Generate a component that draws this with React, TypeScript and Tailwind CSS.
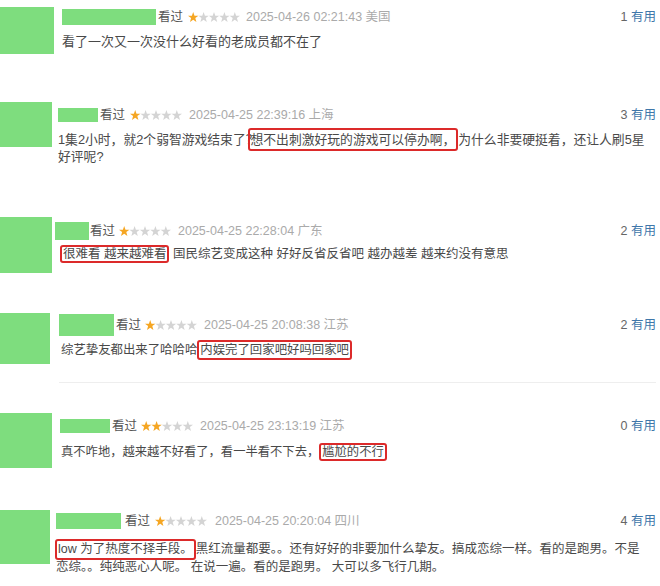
import React from "react";

// 一颗星一格 10.4px，五颗排成一行
const STAR = "5.2,0 6.5,3.7 10.4,3.8 7.3,6.1 8.4,9.9 5.2,7.7 2,9.9 3.1,6.1 0,3.8 3.9,3.7";

function Stars({ rating, className }: { rating: number; className: string }) {
  return (
    <svg width="52" height="10" viewBox="0 0 52 10" className={className}>
      {[0, 1, 2, 3, 4].map((i) => (
        <polygon
          key={i}
          points={STAR}
          transform={`translate(${i * 10.4} 0)`}
          fill={i < rating ? "#f5a623" : "#d4d4d4"}
        />
      ))}
    </svg>
  );
}

// 红框标注
function Mark({ className, children }: { className: string; children: React.ReactNode }) {
  return (
    <span
      className={`inline-block -my-[4px] rounded-[3px] border-2 border-[#dc2a2a] px-[1px] ${className}`}
    >
      {children}
    </span>
  );
}

interface Review {
  box: string;
  avatar: string;
  col: string;
  row: string;
  name: string;
  seen: string;
  stars: string;
  date: string;
  rating: number;
  time: string;
  place: string;
  useful: number;
  body: string;
  content: React.ReactNode;
  after?: React.ReactNode;
}

const reviews: Review[] = [
  {
    box: "h-[95px]",
    avatar: "mt-[7px] h-[47px] w-[54px]",
    col: "ml-[8px]",
    row: "mt-[9px] h-[16px]",
    name: "w-[94px] h-[16px]",
    seen: "ml-[2px]",
    stars: "ml-[5px]",
    date: "ml-[6px]",
    rating: 1,
    time: "2025-04-26 02:21:43",
    place: "美国",
    useful: 1,
    body: "mt-[8px] text-[13px] leading-[18px]",
    content: <>看了一次又一次没什么好看的老成员都不在了</>,
  },
  {
    box: "h-[110px]",
    avatar: "mt-[7px] h-[45px] w-[52px]",
    col: "ml-[6px]",
    row: "mt-[13px] h-[14px]",
    name: "w-[40px] h-[14px]",
    seen: "ml-[2px]",
    stars: "ml-[5px]",
    date: "ml-[7px]",
    rating: 1,
    time: "2025-04-25 22:39:16",
    place: "上海",
    useful: 3,
    body: "mt-[9px] text-[12.8px] leading-[17px]",
    content: (
      <>
        1集2小时，就2个弱智游戏结束了？
        <Mark className="-ml-[11px] leading-[19px]">想不出刺激好玩的游戏可以停办啊，</Mark>
        为什么非要硬挺着，还让人刷5星
        <br />
        好评呢?
      </>
    ),
  },
  {
    box: "h-[95px]",
    avatar: "mt-[12px] h-[56px] w-[52px]",
    col: "ml-[3px]",
    row: "mt-[17px] h-[18px]",
    name: "w-[34px] h-[18px]",
    seen: "ml-[1px]",
    stars: "ml-[4px]",
    date: "ml-[7px]",
    rating: 1,
    time: "2025-04-25 22:28:04",
    place: "广东",
    useful: 2,
    body: "mt-[6px] ml-[5px] text-[12.5px] leading-[17px]",
    content: (
      <>
        <Mark className="leading-[14px]">很难看 越来越难看</Mark> 国民综艺变成这种 好好反省反省吧 越办越差
        越来约没有意思
      </>
    ),
  },
  {
    box: "h-[95px]",
    avatar: "mt-[13px] h-[51px] w-[50px]",
    col: "ml-[9px]",
    row: "mt-[14px] h-[22px]",
    name: "w-[55px] h-[22px]",
    seen: "ml-[2px]",
    stars: "ml-[4px]",
    date: "ml-[7px]",
    rating: 1,
    time: "2025-04-25 20:08:38",
    place: "江苏",
    useful: 2,
    body: "mt-[6px] ml-[2px] text-[12.4px] leading-[17px]",
    content: (
      <>
        综艺挚友都出来了哈哈哈
        <Mark className="leading-[16px]">内娱完了回家吧好吗回家吧</Mark>
      </>
    ),
    after: <div className="mt-[23px] h-px bg-[#eeeeee]" />,
  },
  {
    box: "h-[100px]",
    avatar: "mt-[18px] h-[55px] w-[52px]",
    col: "ml-[8px]",
    row: "mt-[24px] h-[14px]",
    name: "w-[50px] h-[14px]",
    seen: "ml-[2px]",
    stars: "ml-[4px]",
    date: "ml-[7px]",
    rating: 2,
    time: "2025-04-25 23:13:19",
    place: "江苏",
    useful: 0,
    body: "mt-[11px] ml-[1px] text-[12.3px] leading-[17px]",
    content: (
      <>
        真不咋地，越来越不好看了，看一半看不下去，
        <Mark className="leading-[14px]">尴尬的不行</Mark>
      </>
    ),
  },
  {
    box: "h-[91px]",
    avatar: "mt-[15px] h-[54px] w-[50px]",
    col: "ml-[6px]",
    row: "mt-[18px] h-[16px]",
    name: "w-[65px] h-[16px]",
    seen: "ml-[4px]",
    stars: "ml-[5px]",
    date: "ml-[8px]",
    rating: 1,
    time: "2025-04-25 20:20:04",
    place: "四川",
    useful: 4,
    body: "mt-[11px] text-[12.5px] leading-[18px]",
    content: (
      <>
        <Mark className="-ml-[1px] leading-[17px]">low 为了热度不择手段。</Mark>
        黑红流量都要。。还有好好的非要加什么挚友。搞成恋综一样。看的是跑男。不是
        <br />
        恋综。。纯纯恶心人呢。 在说一遍。看的是跑男。 大可以多飞行几期。
      </>
    ),
  },
];

function ReviewItem({ r }: { r: Review }) {
  return (
    <div className={`flex overflow-hidden ${r.box}`}>
      <div className={`shrink-0 bg-[#7edd7e] ${r.avatar}`} />
      <div className={`flex-1 pr-[4px] ${r.col}`}>
        <div className={`flex items-center text-[12.5px] ${r.row}`}>
          <div className={`shrink-0 bg-[#7edd7e] ${r.name}`} />
          <span className={`text-[#555555] ${r.seen}`}>看过</span>
          <Stars rating={r.rating} className={r.stars} />
          <span className={`text-[#aaaaaa] ${r.date}`}>
            {r.time} {r.place}
          </span>
          <span className="ml-auto text-[#666666]">
            {r.useful} <span className="text-[#3f77aa]">有用</span>
          </span>
        </div>
        <p className={`whitespace-nowrap text-[#494949] ${r.body}`}>{r.content}</p>
        {r.after}
      </div>
    </div>
  );
}

export default function App() {
  return (
    <div className="h-[586px] w-[660px] overflow-hidden bg-white font-['Liberation_Sans','Noto_Sans_CJK_SC',sans-serif]">
      {reviews.map((r, i) => (
        <ReviewItem key={i} r={r} />
      ))}
    </div>
  );
}
